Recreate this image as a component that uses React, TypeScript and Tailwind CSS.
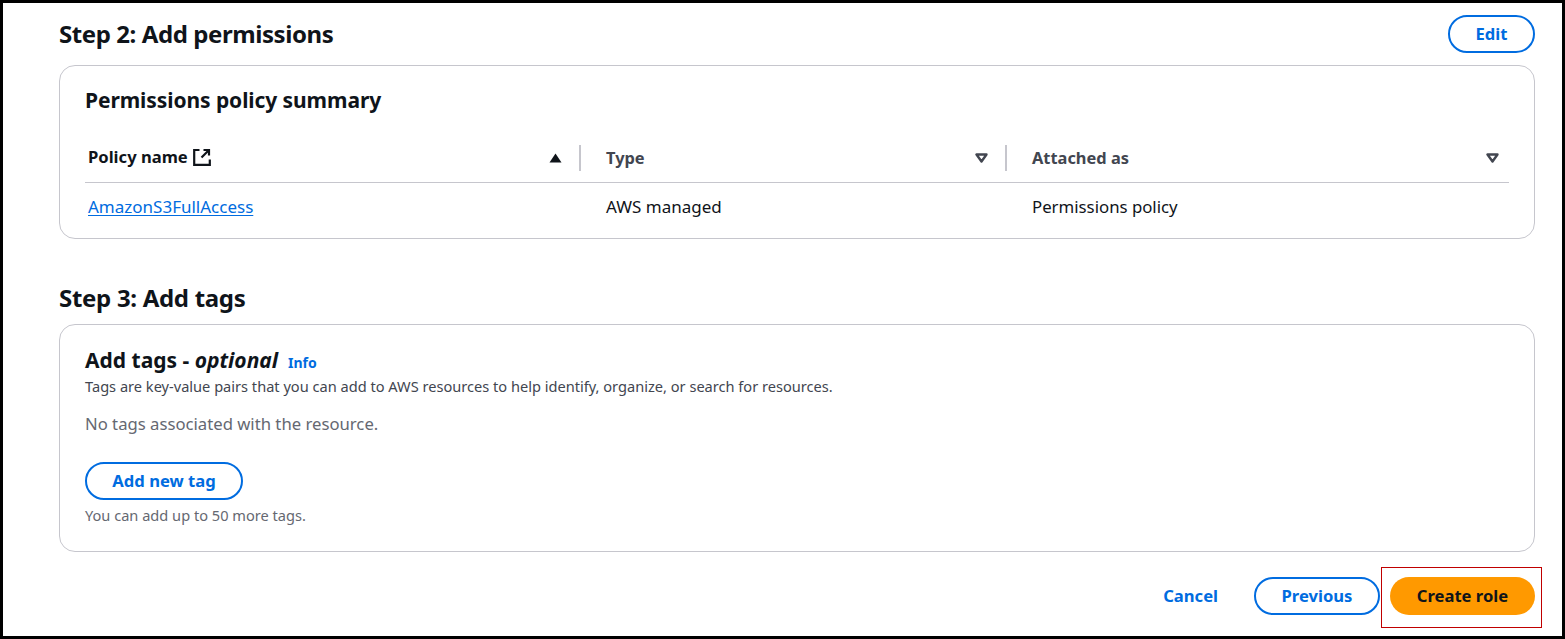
const font = "font-['Noto_Sans',sans-serif]";

function SortIcon({ active }: { active?: boolean }) {
  return (
    <svg width="13" height="10" viewBox="0 0 13 10" className="shrink-0">
      {active ? (
        <path d="M6.5 0.5L12.5 9.5H0.5Z" fill="#0f141a" />
      ) : (
        <path d="M1.5 1.5H11.5L6.5 8.5Z" fill="none" stroke="#424650" strokeWidth="2.4" strokeLinejoin="round" />
      )}
    </svg>
  );
}

function ExternalIcon() {
  return (
    <svg width="18" height="18" viewBox="0 0 18 18" fill="none" stroke="#0f141a" strokeWidth="2.2" className="shrink-0">
      <path d="M6.5 2H1.2V16.8H16.8V11.5" />
      <path d="M10.5 2H16V7.5M16 2L8.5 9.5" />
    </svg>
  );
}

function PillButton({ label, className }: { label: string; className: string }) {
  return (
    <button className={`flex h-[38px] items-center justify-center rounded-[20px] border-2 border-[#006ce0] text-[16.6px] font-bold text-[#006ce0] ${className}`}>
      {label}
    </button>
  );
}

export default function App() {
  return (
    <div className={`relative flex h-[639px] w-[1565px] flex-col border-[3px] border-black bg-white pl-[56px] pr-[27px] ${font}`}>
      <div className="mt-[12px] flex h-[38px] items-center justify-between">
        <h2 className="text-[24px] font-bold tracking-[-0.42px] text-[#0f141a]">Step 2: Add permissions</h2>
        <PillButton label="Edit" className="w-[87px]" />
      </div>

      <section className="mt-[12px] h-[174px] rounded-[16px] border border-[#c6c6cd] px-[25px] pt-[20px]">
        <h3 className="h-[30px] text-[21px] leading-[28px] font-bold tracking-[-0.08px] text-[#0f141a]">Permissions policy summary</h3>
        <div className="mt-[17px] grid h-[50px] grid-cols-[496px_426px_1fr] items-center border-b border-[#c6c6cd] text-[16.6px] font-bold">
          <div className="flex h-[26px] items-center justify-between border-r-2 border-[#c6c6cd] pl-[3px] pr-[17px] text-[#0f141a]">
            <span className="flex items-center gap-[5px]">
              Policy name
              <ExternalIcon />
            </span>
            <SortIcon active />
          </div>
          <div className="flex h-[26px] items-center justify-between border-r-2 border-[#c6c6cd] pl-[25px] pr-[17px] text-[#424650]">
            <span className="pt-[2px] text-[16.4px]">Type</span>
            <SortIcon />
          </div>
          <div className="flex h-[26px] items-center justify-between pl-[25px] pr-[10px] text-[#424650]">
            <span className="pt-[2px] text-[16.4px]">Attached as</span>
            <SortIcon />
          </div>
        </div>
        <div className="grid h-[48px] grid-cols-[496px_426px_1fr] items-center text-[17px] text-[#0f141a]">
          <a className="justify-self-start pl-[3px] text-[#006ce0] underline underline-offset-2">AmazonS3FullAccess</a>
          <span className="pl-[25px]">AWS managed</span>
          <span className="pl-[25px] text-[16.8px]">Permissions policy</span>
        </div>
      </section>

      <h2 className="mt-[42px] h-[34px] text-[24px] leading-[34px] font-bold tracking-[-0.3px] text-[#0f141a]">Step 3: Add tags</h2>

      <section className="mt-[9px] h-[228px] rounded-[16px] border border-[#c6c6cd] px-[25px] pt-[21px]">
        <div className="flex h-[30px] items-center gap-[10px]">
          <h3 className="text-[21px] font-bold text-[#0f141a]">
            Add tags - <em className="font-bold">optional</em>
          </h3>
          <span className="mt-[3px] text-[14px] font-bold text-[#006ce0]">Info</span>
        </div>
        <p className="h-[20px] text-[14.6px] leading-[20px] text-[#424650]">Tags are key-value pairs that you can add to AWS resources to help identify, organize, or search for resources.</p>
        <p className="mt-[16px] h-[24px] text-[16.7px] leading-[24px] text-[#656871]">No tags associated with the resource.</p>
        <PillButton label="Add new tag" className="mt-[26px] w-[158px]" />
        <p className="mt-[6px] h-[18px] text-[14.6px] leading-[18px] text-[#656871]">You can add up to 50 more tags.</p>
      </section>

      <div className="mt-[25px] flex h-[38px] items-center justify-end gap-[10px]">
        <a className="mr-[26px] text-[16.6px] font-bold text-[#006ce0]">Cancel</a>
        <PillButton label="Previous" className="w-[126px]" />
        <button className="relative flex h-[38px] w-[145px] items-center justify-center rounded-[20px] bg-[#ff9900] text-[16.6px] font-bold text-[#0f141a]">
          Create role
          <span className="absolute -top-[10px] -bottom-[13px] -left-[9px] -right-[7px] border border-[#c00000]" />
        </button>
      </div>
    </div>
  );
}
